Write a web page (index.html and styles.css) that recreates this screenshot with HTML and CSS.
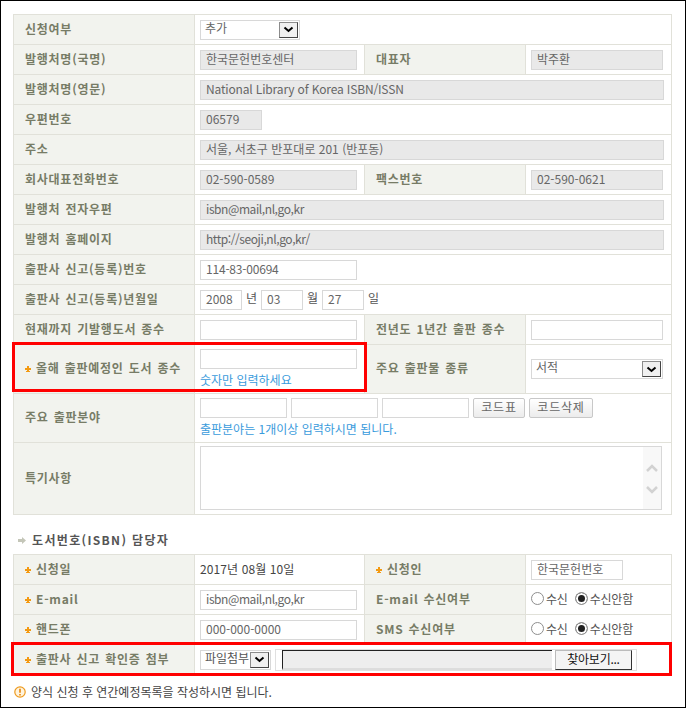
FILE: index.html
```html
<!DOCTYPE html>
<html lang="ko">
<head>
<meta charset="utf-8">
<title>ISBN 신청</title>
<link rel="stylesheet" href="styles.css">
</head>
<body>
<div class="frame">
  <table class="form">
    <colgroup><col class="c1"><col class="c2"><col class="c3"><col class="c4"></colgroup>
    <tr><th>신청여부</th><td colspan="3"><div class="sel w100"><span>추가</span><i class="arrow"><svg width="11" height="7" viewBox="0 0 11 7"><path d="M1.500 1.500 5.500 5 9.500 1.500" fill="none" stroke="#000" stroke-width="2"/></svg></i></div></td></tr>
    <tr><th>발행처명(국명)</th><td><div class="field ro w157">한국문헌번호센터</div></td><th>대표자</th><td><div class="field ro w132">박주환</div></td></tr>
    <tr><th>발행처명(영문)</th><td colspan="3"><div class="field ro wide latin">National Library of Korea ISBN/ISSN</div></td></tr>
    <tr><th>우편번호</th><td colspan="3"><div class="field ro w62">06579</div></td></tr>
    <tr><th>주소</th><td colspan="3"><div class="field ro wide">서울, 서초구 반포대로 201 (반포동)</div></td></tr>
    <tr><th>회사대표전화번호</th><td><div class="field ro w157">02-590-0589</div></td><th>팩스번호</th><td><div class="field ro w132">02-590-0621</div></td></tr>
    <tr><th>발행처 전자우편</th><td colspan="3"><div class="field ro wide mail">isbn@mail,nl,go,kr</div></td></tr>
    <tr><th>발행처 홈페이지</th><td colspan="3"><div class="field ro wide mail">http://seoji,nl,go,kr/</div></td></tr>
    <tr><th>출판사 신고(등록)번호</th><td colspan="3"><div class="field w157 num">114-83-00694</div></td></tr>
    <tr><th>출판사 신고(등록)년월일</th><td colspan="3"><div class="inline"><div class="field w42">2008</div><span class="unit">년</span><div class="field w42">03</div><span class="unit">월</span><div class="field w42">27</div><span class="unit">일</span></div></td></tr>
    <tr><th>현재까지 기발행도서 종수</th><td><div class="field w157"></div></td><th>전년도 1년간 출판 종수</th><td><div class="field w132"></div></td></tr>
    <tr class="tall49"><th><svg class="star" width="6" height="6" viewBox="0 0 6 6"><path d="M0 2h6v2H0zM2 0h2v5H2zM1 5h4v1H1z" fill="#f39a12"/></svg>올해 출판예정인 도서 종수</th><td class="stack"><div class="field w157"></div><p class="hint">숫자만 입력하세요</p></td><th>주요 출판물 종류</th><td><div class="sel w132"><span>서적</span><i class="arrow"><svg width="11" height="7" viewBox="0 0 11 7"><path d="M1.500 1.500 5.500 5 9.500 1.500" fill="none" stroke="#000" stroke-width="2"/></svg></i></div></td></tr>
    <tr class="tall49"><th>주요 출판분야</th><td colspan="3" class="stack"><div class="inline tight"><div class="field w87"></div><div class="field w87"></div><div class="field w87"></div><button class="btn w52">코드표</button><button class="btn w64">코드삭제</button></div><p class="hint">출판분야는 1개이상 입력하시면 됩니다.</p></td></tr>
    <tr class="tall72"><th>특기사항</th><td colspan="3" class="areacell"><div class="area"><div class="scroll"><svg width="12" height="8" viewBox="0 0 12 8"><path d="M1 7 6 2 11 7" fill="none" stroke="#d2d2d2" stroke-width="2.500"/></svg><svg width="12" height="8" viewBox="0 0 12 8"><path d="M1 1 6 6 11 1" fill="none" stroke="#d2d2d2" stroke-width="2.500"/></svg></div></div></td></tr>
  </table>

  <h2 class="heading"><svg width="8" height="7" viewBox="0 0 8 7"><path d="M0 2h4V0l4 3.500L4 7V5H0z" fill="#c4c6b8"/></svg>도서번호(ISBN) 담당자</h2>

  <table class="form">
    <colgroup><col class="c1"><col class="c2"><col class="c3"><col class="c4"></colgroup>
    <tr><th><svg class="star" width="6" height="6" viewBox="0 0 6 6"><path d="M0 2h6v2H0zM2 0h2v5H2zM1 5h4v1H1z" fill="#f39a12"/></svg>신청일</th><td class="plain">2017년 08월 10일</td><th><svg class="star" width="6" height="6" viewBox="0 0 6 6"><path d="M0 2h6v2H0zM2 0h2v5H2zM1 5h4v1H1z" fill="#f39a12"/></svg>신청인</th><td><div class="field w92">한국문헌번호</div></td></tr>
    <tr><th><svg class="star" width="6" height="6" viewBox="0 0 6 6"><path d="M0 2h6v2H0zM2 0h2v5H2zM1 5h4v1H1z" fill="#f39a12"/></svg>E-mail</th><td><div class="field w157 mail">isbn@mail,nl,go,kr</div></td><th>E-mail 수신여부</th><td><div class="radios"><span class="radio"></span><span class="rlabel">수신</span><span class="radio on"></span><span class="rlabel">수신안함</span></div></td></tr>
    <tr><th><svg class="star" width="6" height="6" viewBox="0 0 6 6"><path d="M0 2h6v2H0zM2 0h2v5H2zM1 5h4v1H1z" fill="#f39a12"/></svg>핸드폰</th><td><div class="field w157">000-000-0000</div></td><th>SMS 수신여부</th><td><div class="radios"><span class="radio"></span><span class="rlabel">수신</span><span class="radio on"></span><span class="rlabel">수신안함</span></div></td></tr>
    <tr><th><svg class="star" width="6" height="6" viewBox="0 0 6 6"><path d="M0 2h6v2H0zM2 0h2v5H2zM1 5h4v1H1z" fill="#f39a12"/></svg>출판사 신고 확인증 첨부</th><td colspan="3"><div class="inline attach"><div class="sel w71"><span>파일첨부</span><i class="arrow"><svg width="11" height="7" viewBox="0 0 11 7"><path d="M1.500 1.500 5.500 5 9.500 1.500" fill="none" stroke="#000" stroke-width="2"/></svg></i></div><div class="filebox"><div class="filepath"></div><button class="browse">찾아보기...</button></div></div></td></tr>
  </table>

  <p class="notice"><svg width="12" height="12" viewBox="0 0 12 12"><circle cx="6" cy="6" r="5.200" fill="#fff4de" stroke="#ee9a1e" stroke-width="1.200"/><path d="M6 2.800v4M6 8v1.400" stroke="#e8850c" stroke-width="1.600"/></svg>양식 신청 후 연간예정목록을 작성하시면 됩니다.</p>

  <div class="mark mark-a"></div>
  <div class="mark mark-b"></div>
</div>
</body>
</html>
```
FILE: styles.css
```css
* { box-sizing: border-box; }
html, body { margin: 0; padding: 0; background: #fff; }
body { font-family: "Noto Sans CJK KR", "Liberation Sans", sans-serif; font-size: 12px; color: #555; }
.frame { position: relative; width: 686px; height: 708px; border: 1px solid #000; padding: 13px 0 0 12px; overflow: hidden; }
.form { border-collapse: collapse; table-layout: fixed; width: 658px; }
.c1 { width: 181px; } .c2 { width: 170px; } .c3 { width: 161px; } .c4 { width: 146px; }
.form th, .form td { border: 1px solid #e1e1d9; height: 30px; padding: 0 0 0 5px; vertical-align: middle; }
.form th { background: #f2f3ee; padding: 0 0 2px 11px; text-align: left; font-weight: 700; color: #777c66; letter-spacing: .75px; word-spacing: 1px; white-space: nowrap; line-height: 14px; }
.form tr.tall49 th, .form tr.tall49 td { height: 49px; }
.form tr.tall72 th, .form tr.tall72 td { height: 72px; }
.form td.areacell { padding-bottom: 2px; }
.form td.plain { padding-left: 5px; color: #444; letter-spacing: .1px; padding-bottom: 2px; }
.star { margin-right: 5px; vertical-align: 1px; }
.field { height: 20px; border: 1px solid #d8d8d8; background: #fff; padding: 0 0 0 5px; line-height: 15px; color: #666; white-space: nowrap; overflow: hidden; }
.ro { background: #e9e9e9; }
.latin { letter-spacing: -.15px; }
.mail { letter-spacing: -.42px; }
.num { letter-spacing: -.2px; }
.wide { width: 464px; } .w157 { width: 157px; } .w132 { width: 132px; } .w62 { width: 62px; }
.w42 { width: 42px; } .w87 { width: 87px; } .w92 { width: 92px; } .w100 { width: 100px; } .w71 { width: 71px; }
.w52 { width: 52px; } .w64 { width: 64px; }
.inline { display: flex; align-items: center; }
.tight { gap: 4px; }
.unit { margin: 0 4px; width: 11px; color: #555; padding-bottom: 4px; line-height: 15px; }
.sel { position: relative; height: 20px; border: 1px solid #d8d8d8; background: #fff; padding-left: 4px; line-height: 14px; color: #666; display: flex; justify-content: space-between; }
.arrow { width: 19px; height: 16px; margin: 1px 1px 0 0; background: #f0f0f0; border: 1px solid #8c8c8c; border-right-color: #444; border-bottom-color: #444; display: flex; align-items: center; justify-content: center; }
.stack { vertical-align: top !important; padding-top: 4px !important; }
.hint { margin: 3px 0 0; color: #3a9bdc; line-height: 15px; }
.btn { height: 20px; padding: 0 0 2px; border: 1px solid #c8c8c8; border-radius: 2px; background: linear-gradient(#fff, #ececec); font: 12px/14px "Noto Sans CJK KR", sans-serif; letter-spacing: .8px; color: #666; }
.area { position: relative; width: 462px; height: 64px; border: 1px solid #d8d8d8; background: #fff; }
.scroll { position: absolute; top: 0; right: 0; bottom: 0; width: 18px; background: #f8f8f8; display: flex; flex-direction: column; align-items: center; gap: 14px; padding-top: 17px; }
.heading { margin: 18px 0 7px; height: 14px; font-size: 12px; line-height: 14px; font-weight: 700; color: #555; letter-spacing: 1.35px; padding-left: 5px; display: flex; align-items: center; gap: 6px; }
.radios { display: flex; align-items: center; padding-bottom: 3px; }
.radio { position: relative; width: 13px; height: 13px; border: 1px solid #8e8e8e; border-radius: 50%; background: #fff; }
.radio.on { box-shadow: inset 0 0 0 2px #fff; background: #222; border-color: #999; }
.rlabel { margin: 0 7px 0 2px; color: #555; line-height: 15px; letter-spacing: -.2px; }
.attach { gap: 4px; }
.attach .sel { color: #555; }
.filebox { width: 362px; height: 22px; border: 1px solid #e0e0e0; display: flex; align-items: center; padding-left: 6px; }
.filepath { width: 270px; height: 20px; background: #eee; border-top: 1px solid #222; border-left: 1px solid #222; border-bottom: 2px solid #ddd; }
.browse { width: 77px; height: 20px; margin-left: 3px; padding: 0 0 2px; border: 1px solid #bbb; border-right-color: #333; border-bottom-color: #333; background: #f4f4f4; font: 12px/14px "Noto Sans CJK KR", sans-serif; letter-spacing: -.25px; color: #111; }
.notice { margin: 10px 0 0 1px; display: flex; align-items: center; gap: 5px; color: #444; letter-spacing: 0; line-height: 14px; }
.mark { position: absolute; border: 3px solid #f00; }
.mark-a { left: 11px; top: 341px; width: 355px; height: 50px; }
.mark-b { left: 10px; top: 641px; width: 661px; height: 34px; }
```
